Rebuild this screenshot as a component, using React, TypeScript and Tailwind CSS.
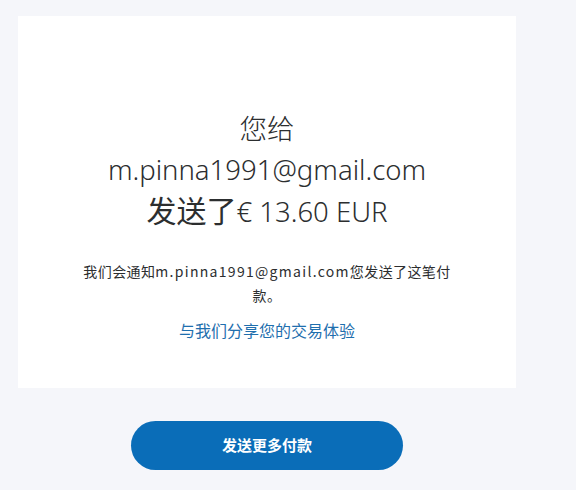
export default function App() {
  return (
    <div className="min-h-[490px] w-full bg-[#f5f6fa]" style={{ fontFamily: '"Noto Sans", "Noto Sans CJK SC", sans-serif' }}>
      <div className="ml-[18px] w-[498px] pt-[16px]">
        <div className="flex h-[372px] flex-col items-center bg-white px-[40px] pt-[92px]">
          <h1 className="text-center text-[27.5px] font-light leading-[41px] text-[#2c2e2f]">
            <div>您给</div>
            <div>m.pinna1991@gmail.com</div>
            <div>
              <span className="text-[30px] font-normal">发送了</span>€ 13.60 EUR
            </div>
          </h1>
          <p className="mt-[27px] w-[386px] text-center text-[14px] leading-[24px] tracking-[0.4px] text-[#2c2e2f]" style={{ fontFamily: '"Noto Sans CJK SC", sans-serif' }}>
            我们会通知<span className="tracking-[1.3px]">m.pinna1991@gmail.com</span>您发送了这笔付款。
          </p>
          <a className="mt-[11px] text-[16px] leading-[24px] text-[#1f6fae]" style={{ fontFamily: '"Noto Sans CJK SC", sans-serif' }}>
            与我们分享您的交易体验
          </a>
        </div>
        <div className="flex justify-center pt-[33px]">
          <button className="h-[49px] w-[272px] rounded-full bg-[#0a6db8] text-[15px] font-bold text-white" style={{ fontFamily: '"Noto Sans CJK SC", sans-serif' }}>
            发送更多付款
          </button>
        </div>
      </div>
    </div>
  );
}
